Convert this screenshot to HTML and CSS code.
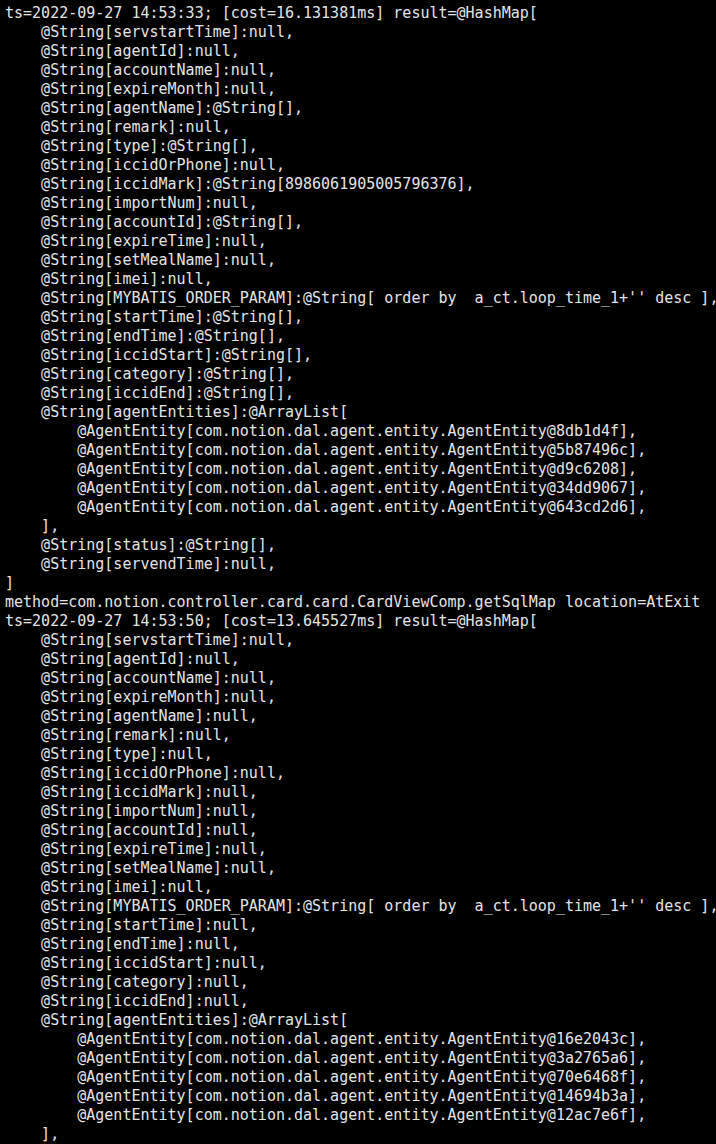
FILE: index.html
```html
<!DOCTYPE html>
<html lang="en">

<head>
    <meta charset="UTF-8">
    <meta name="viewport" content="width=device-width, initial-scale=1.0">
    <title>Terminal</title>
    <link rel="stylesheet" href="styles.css">
</head>

<body>
<pre class="term">ts=2022-09-27 14:53:33; [cost=16.131381ms] result=@HashMap[
    @String[servstartTime]:null,
    @String[agentId]:null,
    @String[accountName]:null,
    @String[expireMonth]:null,
    @String[agentName]:@String[],
    @String[remark]:null,
    @String[type]:@String[],
    @String[iccidOrPhone]:null,
    @String[iccidMark]:@String[8986061905005796376],
    @String[importNum]:null,
    @String[accountId]:@String[],
    @String[expireTime]:null,
    @String[setMealName]:null,
    @String[imei]:null,
    @String[MYBATIS_ORDER_PARAM]:@String[ order by  a_ct.loop_time_1+'' desc ],
    @String[startTime]:@String[],
    @String[endTime]:@String[],
    @String[iccidStart]:@String[],
    @String[category]:@String[],
    @String[iccidEnd]:@String[],
    @String[agentEntities]:@ArrayList[
        @AgentEntity[com.notion.dal.agent.entity.AgentEntity@8db1d4f],
        @AgentEntity[com.notion.dal.agent.entity.AgentEntity@5b87496c],
        @AgentEntity[com.notion.dal.agent.entity.AgentEntity@d9c6208],
        @AgentEntity[com.notion.dal.agent.entity.AgentEntity@34dd9067],
        @AgentEntity[com.notion.dal.agent.entity.AgentEntity@643cd2d6],
    ],
    @String[status]:@String[],
    @String[servendTime]:null,
]
method=com.notion.controller.card.card.CardViewComp.getSqlMap location=AtExit
ts=2022-09-27 14:53:50; [cost=13.645527ms] result=@HashMap[
    @String[servstartTime]:null,
    @String[agentId]:null,
    @String[accountName]:null,
    @String[expireMonth]:null,
    @String[agentName]:null,
    @String[remark]:null,
    @String[type]:null,
    @String[iccidOrPhone]:null,
    @String[iccidMark]:null,
    @String[importNum]:null,
    @String[accountId]:null,
    @String[expireTime]:null,
    @String[setMealName]:null,
    @String[imei]:null,
    @String[MYBATIS_ORDER_PARAM]:@String[ order by  a_ct.loop_time_1+'' desc ],
    @String[startTime]:null,
    @String[endTime]:null,
    @String[iccidStart]:null,
    @String[category]:null,
    @String[iccidEnd]:null,
    @String[agentEntities]:@ArrayList[
        @AgentEntity[com.notion.dal.agent.entity.AgentEntity@16e2043c],
        @AgentEntity[com.notion.dal.agent.entity.AgentEntity@3a2765a6],
        @AgentEntity[com.notion.dal.agent.entity.AgentEntity@70e6468f],
        @AgentEntity[com.notion.dal.agent.entity.AgentEntity@14694b3a],
        @AgentEntity[com.notion.dal.agent.entity.AgentEntity@12ac7e6f],
    ],</pre>
</body>

</html>
```

FILE: styles.css
```css
html,
body {
    margin: 0;
    background-color: #000;
}

.term {
    margin: 0;
    padding: 4px 0 0 5px;
    font-family: "DejaVu Sans Mono", monospace;
    font-size: 15px;
    line-height: 19px;
    color: #e4e4e4;
    white-space: pre;
}
```
